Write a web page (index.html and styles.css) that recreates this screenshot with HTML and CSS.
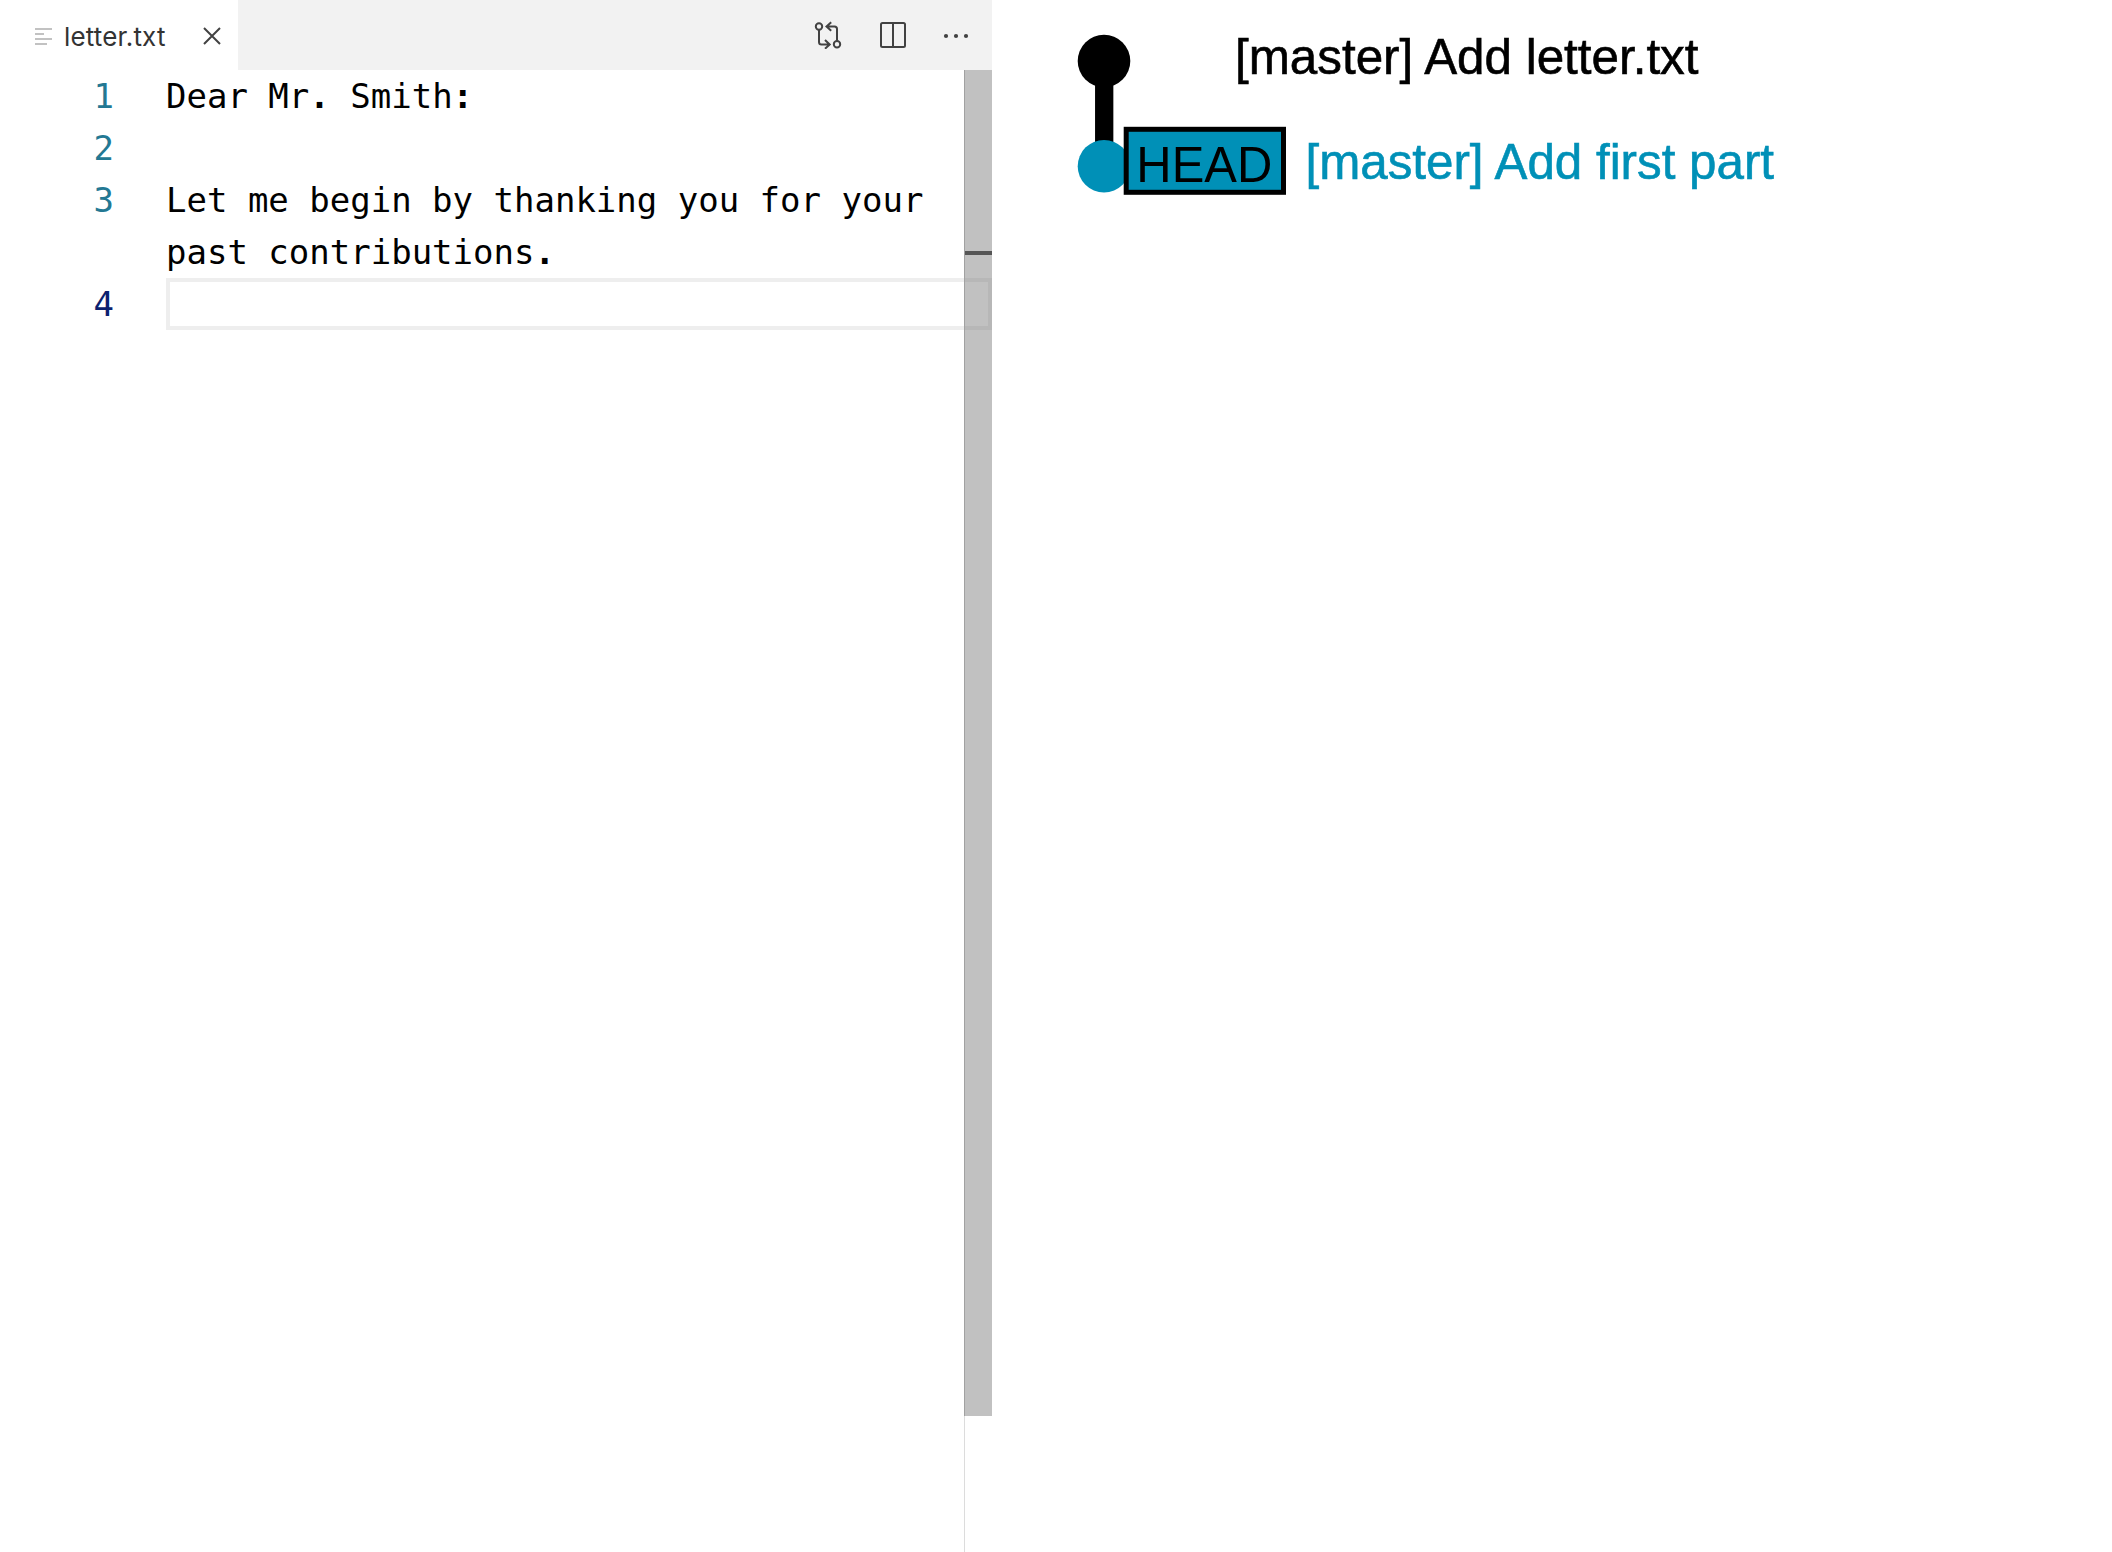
FILE: index.html
```html
<!DOCTYPE html>
<html lang="en">
<head>
<meta charset="utf-8">
<title>letter.txt</title>
<link rel="stylesheet" href="styles.css">
</head>
<body>
<div class="workspace">
  <section class="editor">
    <header class="tabs">
      <div class="tab">
        <svg class="file-icon" width="18" height="20" viewBox="0 0 18 20"><path d="M0 2h17M0 7h9M0 12h17M0 17h12"/></svg>
        <span class="tab-label">letter.txt</span>
        <svg class="close-icon" width="18" height="18" viewBox="0 0 18 18"><path d="M1 1l16 16M17 1L1 17"/></svg>
      </div>
      <div class="actions">
        <svg class="action" width="28" height="28" viewBox="0 0 28 28"><circle cx="5" cy="5.500" r="3.2"/><circle cx="23" cy="23.200" r="3.2"/><path d="M5 9v12q0 2.500 2.500 2.500h8M11 19l4.700 4.500-4.700 4.200M23 19.700V8Q23 5.500 20.500 5.500H13M17.200 1.200L12.500 5.500l4.700 4.300"/></svg>
        <svg class="action" width="28" height="28" viewBox="0 0 28 28"><rect x="3" y="2" width="24" height="24" rx="1.500"/><path d="M15 2v24"/></svg>
        <svg class="action dots" width="28" height="28" viewBox="0 0 28 28"><circle cx="4" cy="15" r="2.100"/><circle cx="14" cy="15" r="2.100"/><circle cx="24" cy="15" r="2.100"/></svg>
      </div>
    </header>
    <div class="code">
      <div class="row"><span class="num">1</span><span class="text">Dear Mr<b>.</b> Smith<b>:</b></span></div>
      <div class="row"><span class="num">2</span><span class="text"></span></div>
      <div class="row"><span class="num">3</span><div class="text"><div>Let me begin by thanking you for your</div><div>past contributions<b>.</b></div></div></div>
      <div class="row"><span class="num active">4</span><span class="text current"></span></div>
      <div class="ruler"><div class="slider"><div class="cursor-mark"></div></div></div>
    </div>
  </section>
  <section class="history">
    <svg class="graph" width="1120" height="240" viewBox="992 0 1120 240">
      <path class="branch" d="M1104.200 61v105"/>
      <circle cx="1104" cy="61" r="26.300"/>
      <circle class="blue" cx="1104" cy="166.200" r="26.300"/>
      <rect class="head" x="1126.200" y="129.300" width="157.300" height="63"/>
      <text x="1136.300" y="182" textLength="136" lengthAdjust="spacingAndGlyphs">HEAD</text>
      <text class="message" x="1235" y="74.400" textLength="463.500" lengthAdjust="spacingAndGlyphs">[master] Add letter.txt</text>
      <text class="message blue" x="1305.500" y="179.400" textLength="468.500" lengthAdjust="spacingAndGlyphs">[master] Add first part</text>
    </svg>
  </section>
</div>
</body>
</html>
```
FILE: styles.css
```css
* { box-sizing: border-box; }
body { margin: 0; background: #fff; }
svg { display: block; fill: none; }
.workspace { display: flex; height: 1552px; overflow: hidden; }
.editor { width: 992px; display: flex; flex-direction: column; }
.tabs { height: 70px; display: flex; justify-content: space-between; background: #f2f2f2; }
.tab { width: 238px; padding-left: 35px; display: flex; align-items: center; background: #fff; }
.file-icon { stroke: #c2c2c2; stroke-width: 2; margin-top: 4px; }
.tab-label { width: 104px; margin: 4px 0 0 11px; font: 26px/32px Inter, sans-serif; letter-spacing: 0.15px; color: #333; white-space: nowrap; }
.close-icon { margin: 2px 0 0 35px; stroke: #424242; stroke-width: 2; }
.actions { display: flex; align-items: center; gap: 36px; padding-right: 22px; }
.action { stroke: #424242; stroke-width: 2; }
.dots { fill: #424242; stroke: none; }
.code { position: relative; flex: 1; font: 34px/52px "DejaVu Sans Mono", monospace; color: #000; }
.row { display: flex; min-height: 52px; }
.num { width: 166px; padding-right: 52px; text-align: right; color: #237893; }
.num.active { color: #0b216f; }
.text { flex: 1; padding-right: 28px; }
.current { border: 4px solid #eee; }
.ruler { position: absolute; top: 0; right: 0; bottom: 0; width: 28px; border-left: 1px solid #dcdcdc; }
.slider { width: 28px; height: 1346px; margin-left: -1px; padding-top: 181px; background: rgba(100, 100, 100, 0.4); border-left: 1px solid rgba(100, 100, 100, 0.15); }
.cursor-mark { height: 4px; background: #555; }
.history { flex: 1; }
.graph { font: 50px "Liberation Sans", Arial, sans-serif; fill: #000; }
.branch { stroke: #000; stroke-width: 18.300px; }
.message { stroke: #000; stroke-width: 0.6px; }
.blue { fill: #0090b7; }
.message.blue { stroke: #0090b7; }
.head { fill: #0090b7; stroke: #000; stroke-width: 5px; }
```
